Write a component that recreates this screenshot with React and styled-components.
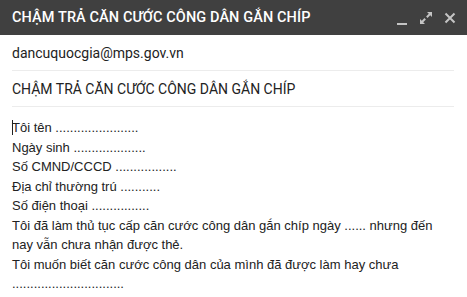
import React from "react";
import styled, { createGlobalStyle } from "styled-components";

const GlobalStyle = createGlobalStyle`
  html, body {
    margin: 0;
    padding: 0;
    background: #fff;
  }
`;

const Window = styled.div`
  width: 467px;
  height: 297px;
  overflow: hidden;
  background: #fff;
  font-family: Roboto, "Liberation Sans", Arial, sans-serif;
`;

const Header = styled.div`
  height: 35px;
  background: #404040;
  display: flex;
  align-items: center;
  justify-content: space-between;
  padding: 0 10px 0 12px;
`;

const Title = styled.div`
  color: #fff;
  font-size: 14.5px;
  font-weight: 500;
  letter-spacing: 0.1px;
`;

const Controls = styled.div`
  display: flex;
  align-items: center;
  gap: 10px;
`;

const CtrlBtn = styled.span`
  width: 14px;
  height: 14px;
  display: flex;
  align-items: center;
  justify-content: center;
`;

const Fields = styled.div`
  padding: 0 13px 0 12px;
`;

const FieldRow = styled.div`
  height: 35px;
  border-bottom: 1px solid #ececec;
  display: flex;
  align-items: center;
  color: #222;
  font-size: 14px;
`;

const Body = styled.div`
  padding: 11px 12px 0 12px;
  font-family: Arial, "Liberation Sans", sans-serif;
  font-size: 13px;
  line-height: 19.5px;
  color: #222;
`;

const Line = styled.div``;

const Caret = styled.span`
  display: inline-block;
  width: 1px;
  height: 15px;
  background: #222;
  vertical-align: -3px;
  margin-right: -1px;
`;

const App = () => {
  return (
    <>
      <GlobalStyle />
      <Window>
        <Header>
          <Title>CHẬM TRẢ CĂN CƯỚC CÔNG DÂN GẮN CHÍP</Title>
          <Controls>
            <CtrlBtn>
              <svg width="14" height="14" viewBox="0 0 14 14">
                <rect x="2" y="12" width="10" height="2" fill="#c4c4c4" />
              </svg>
            </CtrlBtn>
            <CtrlBtn>
              <svg width="14" height="14" viewBox="0 0 14 14">
                <path d="M8 1h5v5l-1.8-1.8-2.7 2.7-1.4-1.4 2.7-2.7z" fill="#c4c4c4" />
                <path d="M6 13H1V8l1.8 1.8 2.7-2.7 1.4 1.4-2.7 2.7z" fill="#c4c4c4" />
              </svg>
            </CtrlBtn>
            <CtrlBtn>
              <svg width="14" height="14" viewBox="0 0 14 14">
                <path d="M2.5 2.5l9 9M11.5 2.5l-9 9" stroke="#c4c4c4" strokeWidth="2" />
              </svg>
            </CtrlBtn>
          </Controls>
        </Header>
        <Fields>
          <FieldRow>dancuquocgia@mps.gov.vn</FieldRow>
          <FieldRow>CHẬM TRẢ CĂN CƯỚC CÔNG DÂN GẮN CHÍP</FieldRow>
        </Fields>
        <Body>
          <Line>
            <Caret />
            Tôi tên .......................
          </Line>
          <Line>Ngày sinh ....................</Line>
          <Line>Số CMND/CCCD .................</Line>
          <Line>Địa chỉ thường trú ...........</Line>
          <Line>Số điện thoại ................</Line>
          <Line>
            Tôi đã làm thủ tục cấp căn cước công dân gắn chíp ngày ...... nhưng đến
            nay vẫn chưa nhận được thẻ.
          </Line>
          <Line>Tôi muốn biết căn cước công dân của mình đã được làm hay chưa</Line>
          <Line>...............................</Line>
        </Body>
      </Window>
    </>
  );
};

export default App;
